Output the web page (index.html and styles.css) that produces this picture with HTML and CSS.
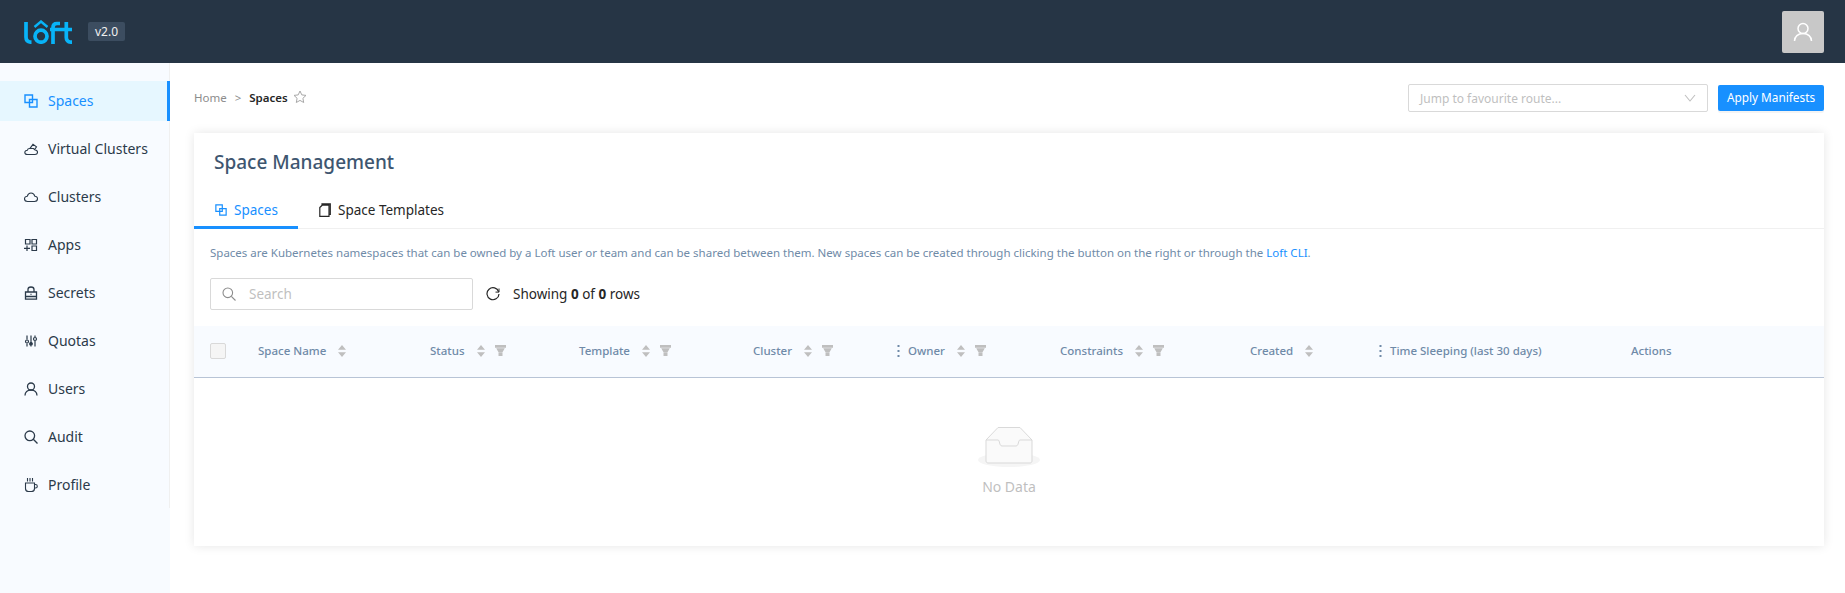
FILE: index.html
```html
<!DOCTYPE html>
<html lang="en">
<head>
  <meta charset="UTF-8" />
  <meta name="viewport" content="width=device-width, initial-scale=1.0" />
  <title>Space Management</title>
  <link rel="stylesheet" href="styles.css">
</head>
<body>
  <svg class="sprites" width="0" height="0">
    <symbol id="i-spaces" viewBox="0 0 14 14"><path d="M1 1h7.500v7.500H1zM5.500 5.500H13V13H5.500z" fill="none" stroke="currentColor" stroke-width="1.400"/></symbol>
    <symbol id="i-sort" viewBox="0 0 8 12"><path d="M4 0l4 4.800H0zM4 12L0 7.200h8z" fill="#bfbfbf"/></symbol>
    <symbol id="i-filter" viewBox="0 0 11 11"><path d="M0 0h11v2.800H0zM1.200 3.200h8.600L7.500 7.200h-4zM3.500 7.600h4V11h-4z" fill="#bfbfbf"/></symbol>
    <symbol id="i-kebab" viewBox="0 0 3 12"><path d="M.5 0h2v2h-2zM.5 5h2v2h-2zM.5 10h2v2h-2z" fill="#6f8aa8"/></symbol>
  </svg>

  <header class="topbar">
    <div class="brand">
      <svg class="logo" width="48" height="24" viewBox="0 0 48 24" fill="none" stroke="#08b4f8" stroke-width="3.700">
        <path d="M2 2v15c0 3.500 1.500 5.200 5.500 5.200"/>
        <circle cx="17" cy="16.200" r="6"/>
        <path d="M10.500 7L17 1.500 23.500 7" stroke-width="2.400"/>
        <path d="M36 3.500h-3c-2.800 0-4 1.500-4 4V24M26 9.500h22"/>
        <path d="M42.300 2v15.500c0 3.200 1.500 4.700 5.700 4.700"/>
      </svg>
      <span class="version">v2.0</span>
    </div>
    <div class="avatar">
      <svg width="20" height="20" viewBox="0 0 20 20" fill="none" stroke="#fff" stroke-width="1.500">
        <circle cx="10" cy="6.500" r="5"/>
        <path d="M1.500 19c0-4.500 3.500-7.500 8.500-7.500s8.500 3 8.500 7.500"/>
      </svg>
    </div>
  </header>

  <div class="layout">
    <div class="sidebar">
      <nav class="menu">
        <a class="nav-item active"><svg class="nav-icon"><use href="#i-spaces"/></svg>Spaces</a>
        <a class="nav-item">
          <svg class="nav-icon" viewBox="0 0 14 14" fill="none" stroke="currentColor" stroke-width="1.100"><path d="M3.500 12.500h7.500c1.500 0 2.500-1 2.500-2.300S12.500 8 11 8L9.500 6.500H5.500C4 6.500 3.500 7.500 3.300 8.300 1.800 8.500.8 9.300.8 10.500s1.200 2 2.700 2zM6 6.300l3-4 3.500 2.500-2 3"/></svg>
          Virtual Clusters
        </a>
        <a class="nav-item">
          <svg class="nav-icon" viewBox="0 0 14 14" fill="none" stroke="currentColor" stroke-width="1.100"><path d="M3.500 11.500h7c1.700 0 3-1 3-2.700 0-1.500-1.200-2.600-2.700-2.600C10.300 4.300 8.800 3 7 3S3.800 4.300 3.300 6.200C1.700 6.300.5 7.300.5 8.800s1.300 2.700 3 2.700z"/></svg>
          Clusters
        </a>
        <a class="nav-item">
          <svg class="nav-icon" viewBox="0 0 14 14" fill="none" stroke="currentColor" stroke-width="1.200"><path d="M1.500 1.500h4.500V6H1.500zM8 1.500h4.500V6H8zM8 8h4.500v4.500H8zM0 10.300h6M3 7.500v5.600"/></svg>
          Apps
        </a>
        <a class="nav-item">
          <svg class="nav-icon" viewBox="0 0 14 14" fill="none" stroke="currentColor" stroke-width="1.300"><path d="M1.500 6h11v7.200h-11zM4 6V3.500C4 1.800 5.300 1 7 1s3 .8 3 2.500V6M1.500 10.500h11M7 7.800v1"/></svg>
          Secrets
        </a>
        <a class="nav-item">
          <svg class="nav-icon" viewBox="0 0 14 14" fill="none" stroke="currentColor" stroke-width="1.200"><path d="M3 1.500v4M3 9.500v3M7 1.500v8M7 11.500v1M11 1.500v1.500M11 7v5.500"/><circle cx="3" cy="7.500" r="1.500"/><circle cx="7" cy="9.800" r="1.300" fill="currentColor"/><circle cx="11" cy="5" r="1.500"/></svg>
          Quotas
        </a>
        <a class="nav-item">
          <svg class="nav-icon" viewBox="0 0 14 14" fill="none" stroke="currentColor" stroke-width="1.300"><circle cx="7" cy="4.500" r="3.500"/><path d="M1 13.500c0-3.300 2.500-5.500 6-5.500s6 2.200 6 5.500"/></svg>
          Users
        </a>
        <a class="nav-item">
          <svg class="nav-icon" viewBox="0 0 14 14" fill="none" stroke="currentColor" stroke-width="1.300"><circle cx="5.800" cy="5.800" r="4.800"/><path d="M9.300 9.300l4.200 4.200"/></svg>
          Audit
        </a>
        <a class="nav-item">
          <svg class="nav-icon" viewBox="0 0 14 14" fill="none" stroke="currentColor" stroke-width="1.100"><path d="M1.500 5h9v5.500c0 1.700-1.300 3-3 3h-3c-1.700 0-3-1.300-3-3zM10.500 6.500h1c1 0 1.800.8 1.800 1.700s-.8 1.800-1.800 1.800h-1M3.500 0v3.500M6 0v3.500M8.500 0v3.500"/></svg>
          Profile
        </a>
      </nav>
    </div>

    <main class="main">
      <div class="toolbar">
        <div class="breadcrumb">
          <span class="crumb">Home</span>
          <span class="crumb-sep">&gt;</span>
          <b class="crumb-current">Spaces</b>
          <svg width="14" height="14" viewBox="0 0 14 14" fill="none" stroke="#a8a8a8" stroke-width="1"><path d="M7 1l1.800 3.900 4.200.5-3.100 2.900.8 4.200L7 10.400 3.300 12.500l.8-4.200L1 5.400l4.200-.5z"/></svg>
        </div>
        <div class="toolbar-right">
          <div class="route-select">
            <span>Jump to favourite route...</span>
            <svg width="12" height="8" viewBox="0 0 12 8" fill="none" stroke="#bfbfbf" stroke-width="1.100"><path d="M1 1l5 6 5-6"/></svg>
          </div>
          <button class="primary-btn">Apply Manifests</button>
        </div>
      </div>

      <section class="card">
        <h1>Space Management</h1>

        <div class="tabs">
          <a class="tab active"><svg class="tab-icon"><use href="#i-spaces"/></svg>Spaces</a>
          <a class="tab">
            <svg class="tab-icon tall" viewBox="0 0 12 14" fill="none" stroke="currentColor" stroke-width="1.200"><path d="M3 1.800V.8h8.300v10.500H10M.8 4.500l2.400-2.300H10v11.200H.8z"/></svg>
            Space Templates
          </a>
        </div>

        <p class="description">Spaces are Kubernetes namespaces that can be owned by a Loft user or team and can be shared between them. New spaces can be created through clicking the button on the right or through the <a>Loft CLI</a>.</p>

        <div class="search-row">
          <div class="search-box">
            <svg width="14" height="14" viewBox="0 0 14 14" fill="none" stroke="#8c8c8c" stroke-width="1.100"><circle cx="5.800" cy="5.800" r="4.800"/><path d="M9.300 9.300l4.200 4.200"/></svg>
            <span>Search</span>
          </div>
          <svg class="refresh" width="14" height="14" viewBox="0 0 14 14" fill="none" stroke="#262626" stroke-width="1.200"><path d="M12.700 4.800A6 6 0 1 0 13 7"/><path d="M13 1.500v3.600H9.500" stroke-width="1"/></svg>
          <span class="row-count">Showing <b>0</b> of <b>0</b> rows</span>
        </div>

        <div class="table-head">
          <div class="col"><span class="checkbox"></span></div>
          <div class="col">Space Name <svg class="sort"><use href="#i-sort"/></svg></div>
          <div class="col">Status <svg class="sort"><use href="#i-sort"/></svg><svg class="filter"><use href="#i-filter"/></svg></div>
          <div class="col">Template <svg class="sort"><use href="#i-sort"/></svg><svg class="filter"><use href="#i-filter"/></svg></div>
          <div class="col">Cluster <svg class="sort"><use href="#i-sort"/></svg><svg class="filter"><use href="#i-filter"/></svg></div>
          <div class="col"><svg class="kebab"><use href="#i-kebab"/></svg>Owner <svg class="sort"><use href="#i-sort"/></svg><svg class="filter"><use href="#i-filter"/></svg></div>
          <div class="col">Constraints <svg class="sort"><use href="#i-sort"/></svg><svg class="filter"><use href="#i-filter"/></svg></div>
          <div class="col">Created <svg class="sort"><use href="#i-sort"/></svg></div>
          <div class="col"><svg class="kebab"><use href="#i-kebab"/></svg>Time Sleeping (last 30 days)</div>
          <div class="col">Actions</div>
        </div>

        <div class="empty">
          <svg width="62" height="41" viewBox="0 0 62 41">
            <ellipse cx="31" cy="33" rx="31" ry="7" fill="#f5f5f5"/>
            <path d="M8 13L20 .5h22L54 13v21c0 1.200-1 2-2 2H10c-1 0-2-.8-2-2z" fill="#fafafa" stroke="#d9d9d9"/>
            <path d="M8 13h12c2 0 1 6 4 6h14c3 0 2-6 4-6h12" fill="none" stroke="#d9d9d9"/>
          </svg>
          <span>No Data</span>
        </div>
      </section>
    </main>
  </div>
</body>
</html>
```

FILE: styles.css
```css
* {
  box-sizing: border-box;
}
html, body {
  height: 100%;
}
body {
  margin: 0;
  font-family: "Noto Sans", sans-serif;
  font-size: 14px;
  color: #262626;
  background: #fff;
  overflow: hidden;
}
.sprites {
  position: absolute;
}

.topbar {
  height: 63px;
  background: #263545;
  display: flex;
  align-items: center;
  justify-content: space-between;
  padding: 0 21px 0 24px;
}
.brand {
  display: flex;
  align-items: center;
  gap: 16px;
}
.logo {
  display: block;
}
.version {
  height: 19px;
  width: 37px;
  background: #3c4d60;
  border-radius: 2px;
  color: #f0f0f0;
  font-size: 12px;
  line-height: 19px;
  text-align: center;
}
.avatar {
  width: 42px;
  height: 42px;
  background: #c8c8c8;
  border-radius: 2px;
  display: flex;
  align-items: center;
  justify-content: center;
}

.layout {
  display: flex;
  height: 530px;
}
.sidebar {
  width: 170px;
  flex: none;
  background: #f8fbff;
}
.menu {
  height: 445px;
  padding-top: 18px;
  border-right: 1px solid #f0f0f0;
}
.nav-item {
  display: flex;
  align-items: center;
  height: 40px;
  margin-bottom: 8px;
  margin-right: -1px;
  padding: 0 0 2px 24px;
  font-size: 14px;
  color: #2b3a4a;
}
.nav-item.active {
  background: #e6f7ff;
  color: #1890ff;
  border-right: 3px solid #1890ff;
}
.nav-icon {
  width: 14px;
  height: 14px;
  margin: 2px 10px 0 0;
  flex: none;
}

.main {
  flex: 1;
  padding: 21px 21px 0 24px;
}
.toolbar {
  display: flex;
  align-items: center;
  justify-content: space-between;
  height: 28px;
  margin-bottom: 21px;
}
.breadcrumb {
  display: flex;
  align-items: center;
  padding-bottom: 2px;
  font-size: 11.5px;
}
.crumb {
  color: #8c8c8c;
}
.crumb-sep {
  color: #8c8c8c;
  margin: 0 8px;
}
.crumb-current {
  font-weight: 600;
  margin-right: 5px;
}
.toolbar-right {
  display: flex;
  align-items: center;
  gap: 10px;
}
.route-select {
  width: 300px;
  height: 28px;
  border: 1px solid #d9d9d9;
  border-radius: 2px;
  display: flex;
  align-items: center;
  justify-content: space-between;
  padding: 0 11px;
  font-size: 12px;
  color: #bfbfbf;
}
.primary-btn {
  width: 106px;
  height: 26px;
  padding: 0 0 2px;
  background: #1890ff;
  color: #fff;
  border: none;
  border-radius: 2px;
  font-family: inherit;
  font-size: 11.8px;
  box-shadow: 0 2px 0 rgba(0,0,0,0.045);
}

.card {
  height: 413px;
  background: #fff;
  box-shadow: 0 0 10px rgba(0,0,0,0.1);
}
.card h1 {
  margin: 0;
  padding: 16px 20px 0;
  height: 62px;
  font-size: 19px;
  line-height: 27px;
  font-weight: 500;
  color: #3e5670;
}
.tabs {
  display: flex;
  height: 34px;
  border-bottom: 1px solid #f0f0f0;
}
.tab {
  display: flex;
  align-items: center;
  height: 34px;
  padding: 0 0 2px 21px;
  width: 104px;
  white-space: nowrap;
  font-size: 13.5px;
  border-bottom: 3px solid transparent;
}
.tab.active {
  color: #1890ff;
  border-bottom-color: #1890ff;
}
.tab-icon {
  width: 12px;
  height: 12px;
  margin-right: 7px;
  flex: none;
}
.tab-icon.tall {
  height: 14px;
}
.description {
  margin: 0;
  padding: 15px 16px 0;
  height: 49px;
  font-size: 11.5px;
  line-height: 18px;
  color: #6f8ba8;
  white-space: nowrap;
}
.description a {
  color: #1890ff;
}
.search-row {
  display: flex;
  align-items: center;
  height: 32px;
  padding-left: 16px;
  margin-bottom: 16px;
  font-size: 13.5px;
}
.search-box {
  width: 263px;
  height: 32px;
  border: 1px solid #d9d9d9;
  border-radius: 2px;
  display: flex;
  align-items: center;
  gap: 13px;
  padding-left: 11px;
  color: #bfbfbf;
}
.refresh {
  margin: 0 13px;
}
.table-head {
  display: grid;
  grid-template-columns: 64px 172px 149px 174px 144px 163px 190px 129px 252px 1fr;
  height: 52px;
  padding-bottom: 2px;
  align-items: center;
  background: #f8fbff;
  border-bottom: 1px solid #b8c4d6;
  font-size: 11.5px;
  font-weight: 500;
  color: #6f8aa8;
  white-space: nowrap;
}
.col {
  display: flex;
  align-items: center;
}
.checkbox {
  display: block;
  width: 16px;
  height: 16px;
  margin-left: 16px;
  background: #f5f5f5;
  border: 1px solid #d9d9d9;
  border-radius: 2px;
}
.sort {
  width: 8px;
  height: 12px;
  margin-left: 12px;
}
.filter {
  width: 11px;
  height: 11px;
  margin-left: 10px;
}
.kebab {
  width: 3px;
  height: 12px;
  margin-right: 8px;
}
.empty {
  display: flex;
  flex-direction: column;
  align-items: center;
  padding-top: 49px;
  gap: 9px;
  color: #bfbfbf;
  font-size: 14px;
}
```
